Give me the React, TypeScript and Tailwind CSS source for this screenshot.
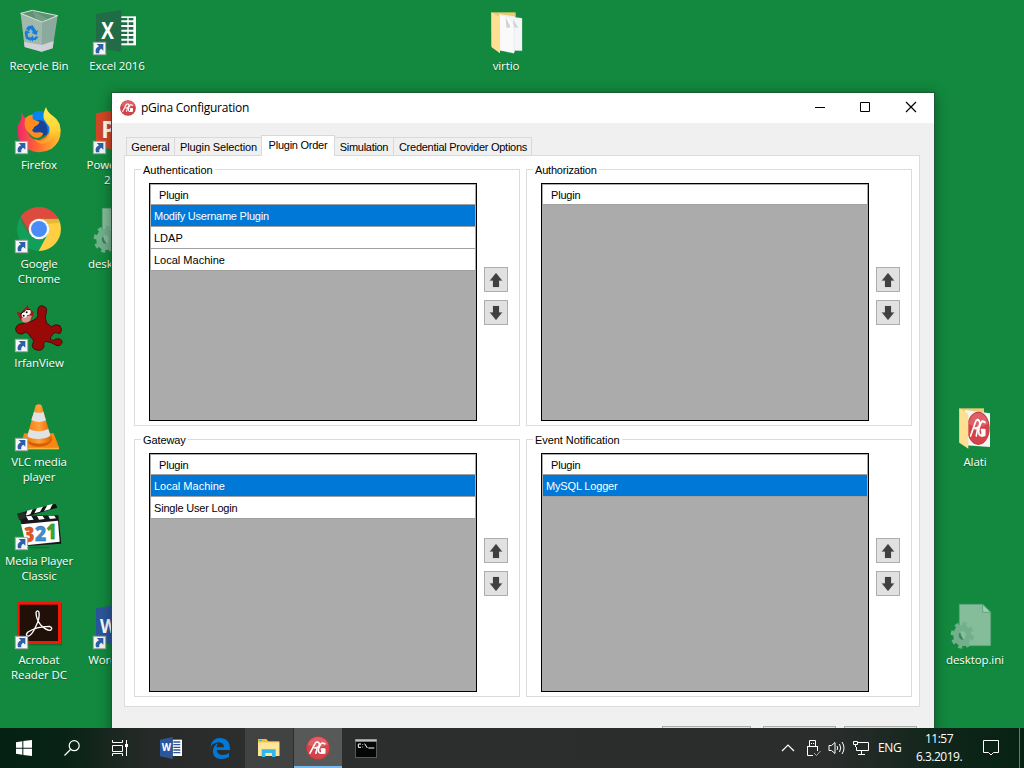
import type { ReactNode } from "react";

const ui = "font-['Liberation_Sans',sans-serif]";
const segoe = "font-['Open_Sans',sans-serif]";

function ShortcutArrow({ x = 45, y }: { x?: number; y: number }) {
  return (
    <g transform={`translate(${x} ${y})`}>
      <rect x="1" y="1" width="37" height="37" fill="#f4f5f7" stroke="#a3a9a5" strokeWidth="3" />
      <path d="M11 6H31V26L25 20Q17 24 19 34H9Q4 19 18 13Z" fill="#2c5fa5" />
    </g>
  );
}

function GinaMark() {
  return (
    <g>
      <circle r="50" fill="#c23a41" />
      <circle r="47" fill="#d4434a" />
      <path d="M-44-14A46 46 0 0 1 44-14Q0 5-44-14Z" fill="#e5777b" opacity=".6" />
      <g fill="none" stroke="#fff" strokeWidth="7" strokeLinecap="round" strokeLinejoin="round">
        <path d="M-34 22L-12-20Q-9-27 0-25Q10-20 4-8Q0 0-15 0M-4 4L-9 22" />
        <path d="M29-18Q13-27 7-8Q-2 8 4 18Q9 24 22 21L27 5H14" />
      </g>
      <rect x="13" y="2" width="19" height="22" rx="3" fill="#fff" />
    </g>
  );
}

function IniDrawing() {
  return (
    <g>
      <path d="M88 643H158L182 667V767H88Z" fill="#85bd9b" stroke="#5fa47c" strokeWidth="2" />
      <path d="M158 643V667H182Z" fill="#a1cdb2" stroke="#4d986d" strokeWidth="2" />
      <g transform="translate(97 736) scale(.86 1)">
        <circle r="22" fill="none" stroke="#72b08c" strokeWidth="20" />
        <circle r="34" fill="none" stroke="#72b08c" strokeWidth="13" strokeDasharray="13.35 13.35" />
        <path d="M-8-9A13 13 0 0 0 4 13Q-5 2-8-9Z" fill="#3b805a" />
      </g>
    </g>
  );
}

const icons: Record<string, ReactNode> = {
  bin: (
    <svg viewBox="3 0 228 174" className="h-[58px] w-[76px]">
      <path d="M62 40L126 66L173 47L158 145L125 155L74 141Z" fill="#8ba99c" />
      <path d="M62 40L126 66L125 155L74 141Z" fill="#b0c4b9" opacity=".6" />
      <path d="M72 126L125 135L161 123L158 145L125 155L74 141Z" fill="#d5d5dc" opacity=".9" />
      <path d="M62 40L97 31L173 47L126 66Z" fill="#5e9274" stroke="#dce5df" strokeWidth="3" />
      <path d="M97 31L107 56L126 65L142 57Z" fill="#84a895" opacity=".6" />
      <g fill="#187ed5">
        <path d="M84 79L98 76L109 93L114 90L110 105L95 99L99 96L92 86L87 94L78 87Z" />
        <path d="M77 91L90 96L87 100L83 99L84 110L93 113V123L78 116L74 100Z" />
        <path d="M108 108L115 111L107 121L99 120V126L90 115L99 106V112L104 113Z" />
      </g>
    </svg>
  ),
  excel: (
    <svg viewBox="237 0 228 174" className="h-[58px] w-[76px]">
      <rect x="350" y="49" width="58" height="87" fill="#fff" />
      <g fill="#216c46">
        <path d="M362 54H382V61H362ZM386 54H400V61H386ZM362 67H382V75H362ZM386 67H400V75H386ZM362 81H382V89H362ZM386 81H400V89H386ZM362 95H382V102H362ZM386 95H400V102H386ZM362 108H382V116H362ZM386 108H400V116H386ZM362 122H382V130H362ZM386 122H400V130H386Z" />
        <path d="M288 42L364 30V156L288 142Z" />
      </g>
      <text x="323" y="116" textAnchor="middle" fontSize="68" fontWeight="700" fontFamily="Open Sans" fill="#fff" textLength="38" lengthAdjust="spacingAndGlyphs">X</text>
      <ShortcutArrow x={279} y={126} />
    </svg>
  ),
  power: (
    <svg viewBox="237 297 228 174" className="h-[58px] w-[76px]">
      <path d="M288 340L364 327V453L288 439Z" fill="#d24726" />
      <text x="326" y="414" textAnchor="middle" fontSize="70" fontWeight="700" fontFamily="Open Sans" fill="#fff">P</text>
      <ShortcutArrow x={279} y={423} />
    </svg>
  ),
  word: (
    <svg viewBox="237 12 228 174" className="h-[58px] w-[76px]">
      <path d="M288 55L364 43V168L288 155Z" fill="#2b579a" />
      <text x="325" y="130" textAnchor="middle" fontSize="60" fontWeight="700" fontFamily="Open Sans" fill="#fff" textLength="50" lengthAdjust="spacingAndGlyphs">W</text>
      <ShortcutArrow x={279} y={138} />
    </svg>
  ),
  firefox: (
    <svg viewBox="3 297 228 174" className="h-[58px] w-[76px]">
      <defs>
        <linearGradient id="ffBody" x1="0" y1="0" x2="1" y2="0"><stop stopColor="#ef256d" /><stop offset=".45" stopColor="#ff6532" /><stop offset="1" stopColor="#ffc429" /></linearGradient>
        <linearGradient id="ffTail" x1="0" y1="0" x2="0" y2="1"><stop stopColor="#fff056" /><stop offset=".65" stopColor="#ffd033" /><stop offset="1" stopColor="#ff962a" /></linearGradient>
      </defs>
      <path d="M65 336Q69 350 76 354Q92 372 84 396Q92 421 118 420Q146 414 148 385L150 370Q178 368 182 391Q183 427 154 447Q119 465 87 449Q54 433 52 395Q51 375 64 357Z" fill="url(#ffBody)" />
      <path d="M92 346Q110 326 136 336Q156 368 146 400Q118 420 92 396Z" fill="#0a84ee" />
      <path d="M94 373Q107 355 130 363Q147 379 142 403Q113 418 95 399Z" fill="#19429b" />
      <path d="M138 321Q127 343 132 358Q139 369 148 381Q156 410 132 421Q115 426 102 417Q118 437 145 430Q169 424 179 402Q188 367 158 347Q143 338 138 321Z" fill="url(#ffTail)" />
      <path d="M76 354Q87 343 99 344Q95 353 101 359L118 365Q119 373 103 380Q101 387 96 390Q100 400 116 397Q126 395 130 401Q124 412 111 414Q96 412 88 400Q68 384 76 354Z" fill="#ff8c1d" />
      <ShortcutArrow y={423} />
    </svg>
  ),
  chrome: (
    <svg viewBox="3 24 228 174" className="h-[58px] w-[76px]">
      <circle cx="117" cy="117" r="66" fill="#119f59" />
      <path d="M62 80A66 66 0 0 1 176 88H117A29 29 0 0 0 92 132Z" fill="#dd4b3f" />
      <path d="M176 88A66 66 0 0 1 116 183L143 133Q153 109 137 94L117 88Z" fill="#ffce43" />
      <path d="M117 86H175L180 99L141 101Z" fill="#d7ad32" opacity=".65" />
      <path d="M62 80L91 129L87 132L65 97Z" fill="#b23a30" opacity=".5" />
      <circle cx="117" cy="117" r="31" fill="#f7f9f8" />
      <circle cx="117" cy="117" r="24" fill="#4b8bf5" />
      <ShortcutArrow y={150} />
    </svg>
  ),
  irfan: (
    <svg viewBox="3 321 228 174" className="h-[58px] w-[76px]">
      <path d="M80 397Q106 393 114 378Q110 347 124 347Q144 350 139 366Q132 384 140 399L154 410Q168 400 180 407Q189 420 181 430L173 430Q168 424 160 431Q150 440 151 449Q163 454 166 448Q181 443 186 453Q187 468 171 467Q154 456 138 454Q127 459 132 469Q128 484 110 480Q96 477 97 464Q105 450 94 444L84 429Q76 424 66 432Q49 434 47 417Q49 402 66 401Z" fill="#990908" stroke="#400e0c" strokeWidth="3" />
      <path d="M50 366L62 368L83 346L88 359L101 365L97 384L82 399L62 391Z" fill="#a91514" />
      <path d="M64 386Q72 375 96 377L90 393Q75 403 66 394Z" fill="#df8f8c" />
      <circle cx="83" cy="366" r="9" fill="#fff" /><circle cx="73" cy="375" r="8" fill="#fff" />
      <circle cx="80" cy="367" r="3" fill="#111" /><circle cx="71" cy="377" r="3" fill="#111" />
      <path d="M70 365Q79 355 91 359M62 373L70 365" fill="none" stroke="#240b09" strokeWidth="3" />
      <ShortcutArrow y={447} />
    </svg>
  ),
  vlc: (
    <svg viewBox="3 18 228 174" className="h-[58px] w-[76px]">
      <defs><linearGradient id="vlcCone"><stop stopColor="#ef7a12" /><stop offset=".5" stopColor="#ffa13a" /><stop offset="1" stopColor="#e16304" /></linearGradient></defs>
      <path d="M72 130H161L177 172Q177 178 169 178H60Z" fill="#f58713" />
      <path d="M56 173H177V178H56Z" fill="#ffb53e" />
      <path d="M83 139Q87 160 116 162Q146 160 154 139L157 149Q148 169 116 170Q86 168 77 152Z" fill="#d65f06" />
      <path d="M107 46Q117 40 125 46L154 146Q151 160 116 160Q82 159 80 145Z" fill="url(#vlcCone)" />
      <path d="M102 65Q117 72 130 65L138 91Q116 102 94 90ZM88 118Q116 130 145 117L151 136Q145 146 116 147Q85 146 82 138Z" fill="#e1e2e5" />
      <ShortcutArrow y={144} />
    </svg>
  ),
  mpc: (
    <svg viewBox="3 315 228 174" className="h-[58px] w-[76px]">
      <path d="M52 371L167 341L172 353L67 383Z" fill="#111" />
      <path d="M82 362L98 358L91 373L77 377ZM111 354L129 350L120 365L103 370ZM142 346L158 342L150 358L132 363Z" fill="#fff" />
      <path d="M58 377L175 376L184 461L80 468Z" fill="#171918" />
      <path d="M63 403L174 392L179 455L78 466Z" fill="#fff" />
      <path d="M78 379L94 378L101 389L85 391ZM111 378H128L134 387L117 389ZM145 377H163L168 385L150 387Z" fill="#fff" />
      <path d="M51 371L76 367V384L57 390Z" fill="#282b2a" />
      <g fontFamily="Open Sans" fontWeight="800" fontSize="62">
        <text x="72" y="456" fill="#e25320" stroke="#944026" strokeWidth="1" textLength="31" lengthAdjust="spacingAndGlyphs">3</text>
        <text x="105" y="453" fill="#438cd3" stroke="#315b94" strokeWidth="1" textLength="34" lengthAdjust="spacingAndGlyphs">2</text>
        <text x="139" y="448" fill="#38a72d" stroke="#276c2b" strokeWidth="1" textLength="31" lengthAdjust="spacingAndGlyphs">1</text>
      </g>
      <path d="M85 473H147" stroke="#0b592b" strokeWidth="2" />
      <ShortcutArrow y={441} />
    </svg>
  ),
  acrobat: (
    <svg viewBox="3 12 228 174" className="h-[58px] w-[76px]">
      <rect x="53" y="40" width="133" height="126" fill="#085c2a" opacity=".6" />
      <rect x="51" y="36" width="132" height="126" fill="#f21808" />
      <rect x="59" y="44" width="115" height="109" fill="#201008" />
      <path d="M108 67Q113 58 117 67Q120 84 108 108Q95 138 83 139Q75 135 84 126Q107 110 148 109Q161 114 151 121Q139 122 123 106Q108 88 108 67Z" fill="none" stroke="#fff" strokeWidth="4" />
      <ShortcutArrow y={138} />
    </svg>
  ),
  iniLeft: (
    <svg viewBox="18 612 228 174" className="h-[58px] w-[76px]"><IniDrawing /></svg>
  ),
  ini: (
    <svg viewBox="21 612 228 174" className="h-[58px] w-[76px]"><IniDrawing /></svg>
  ),
  virtio: (
    <svg viewBox="-6 0 228 174" className="h-[58px] w-[76px]">
      <path d="M64 37H137V140H64Z" fill="#ebcb72" />
      <path d="M88 43L134 49V156L90 151Z" fill="#f5f5f5" />
      <path d="M111 49L156 55V152L117 151Z" fill="#f4f5f6" stroke="#dadddd" />
      <path d="M88 43L119 53L132 77V160L90 151Z" fill="#fafafa" stroke="#d7dada" />
      <path d="M107 51L109 83L122 82ZM129 56L132 82L145 84Z" fill="#d0d4d4" />
      <path d="M64 37L90 52V160L65 142Z" fill="#ffdf91" />
    </svg>
  ),
  alati: (
    <svg viewBox="21 18 228 174" className="h-[58px] w-[76px]">
      <path d="M88 55H162V157H88Z" fill="#eccb75" />
      <path d="M105 60L180 70V171L108 166Z" fill="#f5f6f6" />
      <g transform="translate(145 115) scale(.68 1)"><GinaMark /></g>
      <path d="M88 55L115 71V176L88 158Z" fill="#ffdf91" />
    </svg>
  ),
};

type Item = { icon: string; lines: string[]; pos: string };
const desktop: Item[] = [
  { icon: "bin", lines: ["Recycle Bin"], pos: "left-[1px] top-0" },
  { icon: "firefox", lines: ["Firefox"], pos: "left-[1px] top-[99px]" },
  { icon: "chrome", lines: ["Google", "Chrome"], pos: "left-[1px] top-[198px]" },
  { icon: "irfan", lines: ["IrfanView"], pos: "left-[1px] top-[297px]" },
  { icon: "vlc", lines: ["VLC media", "player"], pos: "left-[1px] top-[396px]" },
  { icon: "mpc", lines: ["Media Player", "Classic"], pos: "left-[1px] top-[495px]" },
  { icon: "acrobat", lines: ["Acrobat", "Reader DC"], pos: "left-[1px] top-[594px]" },
  { icon: "excel", lines: ["Excel 2016"], pos: "left-[79px] top-0" },
  { icon: "power", lines: ["PowerPoint", "2016"], pos: "left-[79px] top-[99px]" },
  { icon: "iniLeft", lines: ["desktop.ini"], pos: "left-[79px] top-[198px]" },
  { icon: "word", lines: ["Word 2016"], pos: "left-[79px] top-[594px]" },
  { icon: "virtio", lines: ["virtio"], pos: "left-[468px] top-0" },
  { icon: "alati", lines: ["Alati"], pos: "left-[937px] top-[396px]" },
  { icon: "ini", lines: ["desktop.ini"], pos: "left-[937px] top-[594px]" },
];

function DesktopItem({ item }: { item: Item }) {
  return (
    <div className={`absolute flex w-[76px] flex-col items-center ${item.pos}`}>
      {icons[item.icon]}
      <div className="text-center text-[11.5px] leading-[15px] tracking-[-0.1px] whitespace-nowrap text-white [text-shadow:0_1px_1px_#0b5b2b]">
        {item.lines.map((l) => <div key={l}>{l}</div>)}
      </div>
    </div>
  );
}

function ArrowButton({ down = false }: { down?: boolean }) {
  return (
    <button className="flex h-[25px] w-6 items-center justify-center border border-[#adadad] bg-[#e1e1e1]">
      <svg viewBox="0 0 16 16" className={down ? "h-4 w-4 rotate-180" : "h-4 w-4"}>
        <path d="M8 .8L15 9H11.3V15.2H4.7V9H1Z" fill="#9a9a9a" opacity=".55" />
        <path d="M8 1L14 8.5H11V15H5V8.5H2Z" fill="#404040" />
      </svg>
    </button>
  );
}

type Row = { label: string; tracking?: string };

function GroupBox({ title, titleTracking = "", rows, size, list, buttons }: { title: string; titleTracking?: string; rows: Row[]; size: string; list: string; buttons: string }) {
  return (
    <section className={`relative flex w-[386px] border border-[#dcdcdc] pl-[14px] pt-[13px] ${size}`}>
      <span className={`absolute top-[-7px] left-[6px] bg-white px-[2px] leading-[14px] whitespace-nowrap ${titleTracking}`}>{title}</span>
      <div className={`w-[328px] shrink-0 border border-black bg-[#ababab] px-px pt-px ${list}`}>
        <div className="h-5 border-b border-[#a0a0a0] bg-white pl-2 leading-5 tracking-[-0.2px]">Plugin</div>
        {rows.map((r, i) => (
          <div key={r.label} className={`h-[22px] border-b border-[#a0a0a0] pl-[3px] leading-[22px] ${r.tracking ?? ""} ${i === 0 ? "bg-[#0078d7] text-white" : "bg-white"}`}>{r.label}</div>
        ))}
      </div>
      <div className={`ml-[7px] flex flex-col gap-2 ${buttons}`}>
        <ArrowButton />
        <ArrowButton down />
      </div>
    </section>
  );
}

const tabBase = "flex shrink-0 justify-center border border-[#d9d9d9] whitespace-nowrap";

function ConfigWindow() {
  return (
    <div className="absolute top-[92px] left-[111px] flex h-[660px] w-[824px] flex-col border border-[#1b5b33] bg-[#f0f0f0] shadow-[0_2px_12px_rgba(0,0,0,0.4)]">
      <header className="flex h-[30px] shrink-0 items-center bg-white pl-2">
        <svg viewBox="-51 -51 102 102" className="h-4 w-4"><GinaMark /></svg>
        <span className="ml-[5px] text-[12px] tracking-[-0.25px] text-black">pGina Configuration</span>
        <div className="ml-auto flex h-full items-center">
          <svg viewBox="0 0 46 30" className="h-[30px] w-[46px]"><path d="M19 14.5H29" stroke="#000" /></svg>
          <svg viewBox="0 0 46 30" className="h-[30px] w-[46px]"><path d="M18.500 9.500H27.500V18.500H18.500Z" fill="none" stroke="#000" /></svg>
          <svg viewBox="0 0 46 30" className="h-[30px] w-[46px]"><path d="M18 9L28 19M28 9L18 19" stroke="#000" strokeWidth="1.2" /></svg>
        </div>
      </header>
      <div className={`flex flex-1 flex-col px-3 pt-3 text-[11px] text-black ${ui}`}>
        <nav className="z-10 flex h-[21px] items-end pl-[2px]">
          <div className={`${tabBase} h-[19px] w-[49px] leading-[19px] tracking-[-0.1px]`}>General</div>
          <div className={`${tabBase} -ml-px h-[19px] w-[88px] pl-px leading-[19px] tracking-[-0.12px]`}>Plugin Selection</div>
          <div className={`${tabBase} -ml-px h-[21px] w-[74px] border-b-white bg-white leading-[18px] tracking-[-0.25px]`}>Plugin Order</div>
          <div className={`${tabBase} -ml-px h-[19px] w-[60px] leading-[19px] tracking-[-0.3px]`}>Simulation</div>
          <div className={`${tabBase} -ml-px h-[19px] w-[139px] pl-px leading-[19px] tracking-[-0.26px]`}>Credential Provider Options</div>
        </nav>
        <div className="-mt-px grid h-[552px] w-[796px] shrink-0 grid-cols-[386px_386px] content-start gap-x-[6px] gap-y-[13px] border border-[#dcdcdc] bg-white pt-[13px] pl-[9px]">
          <GroupBox title="Authentication" rows={[{ label: "Modify Username Plugin", tracking: "tracking-[-0.23px]" }, { label: "LDAP" }, { label: "Local Machine" }]} size="h-[257px]" list="h-[238px]" buttons="pt-[84px]" />
          <GroupBox title="Authorization" titleTracking="tracking-[-0.2px]" rows={[]} size="h-[257px]" list="h-[238px]" buttons="pt-[84px]" />
          <GroupBox title="Gateway" titleTracking="tracking-[-0.1px]" rows={[{ label: "Local Machine" }, { label: "Single User Login", tracking: "tracking-[-0.2px]" }]} size="h-[258px]" list="h-[239px]" buttons="pt-[85px]" />
          <GroupBox title="Event Notification" titleTracking="tracking-[-0.06px]" rows={[{ label: "MySQL Logger", tracking: "tracking-[-0.17px]" }]} size="h-[258px]" list="h-[239px]" buttons="pt-[85px]" />
        </div>
        <div className="mt-[19px] flex pl-[538px]">
          <button className="h-6 w-[89px] border border-[#adadad] bg-[#e1e1e1]" />
          <button className="ml-3 h-6 w-[73px] border border-[#adadad] bg-[#e1e1e1]" />
          <button className="ml-2 h-6 w-[73px] border border-[#adadad] bg-[#e1e1e1]" />
        </div>
      </div>
    </div>
  );
}

function Taskbar() {
  const tile = "flex h-full shrink-0 items-center justify-center";
  return (
    <footer className="absolute inset-x-0 bottom-0 flex h-10 items-center bg-[linear-gradient(90deg,#042113_0px,#082315_65px,#272a28_150px,#2c2e2d_240px,#2b2d2c_830px,#10251a_940px,#062213_1024px)] text-white">
      <div className={`${tile} w-12`}>
        <svg viewBox="0 0 48 48" className="h-4 w-4" fill="#fff"><path d="M0 7L19 4V23H0ZM22 3L48 0V23H22ZM0 26H19V44L0 41ZM22 26H48V48L22 45Z" /></svg>
      </div>
      <div className={`${tile} w-12`}>
        <svg viewBox="0 0 16 16" className="h-4 w-4" fill="none" stroke="#fff" strokeWidth="1.2"><circle cx="10.2" cy="5.7" r="5" /><path d="M6.500 9.500L.5 15.5" /></svg>
      </div>
      <div className={`${tile} w-12`}>
        <svg viewBox="0 0 16 16" className="h-4 w-4" fill="none" stroke="#fff"><path d="M.5 0V2.500H10.500V0M.5 5.500H10.500V11.500H.5ZM.5 16V13.500H10.500V16M14.500 0V4M14.500 7V16" /><path d="M13 4H16V7H13Z" fill="#fff" stroke="none" /></svg>
      </div>
      <div className={`${tile} ml-[3px] w-12`}>
        <svg viewBox="0 0 66 66" className="h-[22px] w-[22px]"><path d="M38 8H66V57H38Z" fill="#fff" /><path d="M40 15H61M40 23H61M40 31H61M40 39H61M40 47H61" stroke="#2b579a" strokeWidth="4" /><path d="M0 8L38 0V66L0 58Z" fill="#2b579a" /><text x="19" y="43" textAnchor="middle" fontSize="29" fontWeight="700" fontFamily="Open Sans" fill="#fff">W</text></svg>
      </div>
      <div className={`${tile} ml-px w-12`}>
        <svg viewBox="0 0 60 63" className="h-[21px] w-5"><path d="M0 29Q5 0 31 0Q61 0 60 36H20Q22 51 39 51Q49 51 57 45V57Q46 63 34 63Q7 61 9 37Q11 21 25 16Q19 23 20 28H42Q42 14 26 13Q8 14 0 29Z" fill="#0078d7" /></svg>
      </div>
      <div className={`${tile} ml-px w-12 bg-[#414342]`}>
        <svg viewBox="0 0 64 54" className="h-[18px] w-[21.33px]"><path d="M0 0H25L31 7H64V51H0Z" fill="#f5bd36" /><path d="M0 10H64V51H0Z" fill="#ffe59a" /><path d="M11 54V31H53V54H42V42H22V54Z" fill="#35b6e9" /><path d="M4 3H11V6H4Z" fill="#37a7d7" /></svg>
      </div>
      <div className={`${tile} ml-px w-12 border-b-2 border-[#76b9ed] bg-[#565958] pt-[2px]`}>
        <svg viewBox="-51 -51 102 102" className="h-6 w-6"><GinaMark /></svg>
      </div>
      <div className={`${tile} w-12`}>
        <svg viewBox="0 0 66 57" className="h-[19px] w-[22px]"><path d="M1 1H65V56H1Z" fill="#050606" stroke="#8c9290" strokeWidth="2" /><path d="M1 1H65V8H1Z" fill="#bdc1bf" /><path d="M18 15H10V25H18M23 16V18M23 23V25M29 14L37 27M40 27H58" fill="none" stroke="#fff" strokeWidth="3" /></svg>
      </div>
      <div className="ml-auto flex h-full items-center">
        <svg viewBox="0 0 14 8" className="h-2 w-[14px]" fill="none" stroke="#fff" strokeWidth="1.2"><path d="M1 7L7 1L13 7" /></svg>
        <svg viewBox="0 0 14 17" className="ml-3 h-[17px] w-[14px]" fill="none" stroke="#fff"><path d="M2.500 6V.5H8.500V6M.5 6V15.500H6M10.500 6V11M.5 6.500H10.500" /><path d="M4 3H5V4H4ZM6 3H7V4H6Z" fill="#fff" stroke="none" /><path d="M7 13L9.500 15.500L13.500 11" stroke="#aaa" /></svg>
        <svg viewBox="0 0 17 14" className="ml-[7px] h-[14px] w-[17px]" fill="none" stroke="#fff"><path d="M1 4.500H3.500L7 1.500V12.500L3.500 9.500H1ZM9 5Q10.500 7 9 9M11.500 3Q14 7 11.500 11M14 1Q18 7 14 13" /></svg>
        <svg viewBox="0 0 16 14" className="ml-2 h-[14px] w-4" fill="none" stroke="#fff"><path d="M5 1.500H15.500V9.500H3.500V6M8.500 10V13M5 13.500H12M.5 .5H4.500V3.500H.5ZM2.500 4V6" /></svg>
        <span className="ml-[9px] w-6 text-[12px] tracking-[-0.4px]">ENG</span>
        <div className="ml-[11px] w-[52px] text-center text-[12px] leading-[18px] tracking-[-0.5px] whitespace-nowrap"><div>11:57</div><div>6.3.2019.</div></div>
        <svg viewBox="0 0 16 16" className="ml-[18px] h-4 w-4" fill="none" stroke="#fff"><path d="M.5 .5H15.500V12.500H10.500L8 15L5.500 12.500H.5Z" /></svg>
        <div className="ml-5 h-full w-[5px] border-l border-[#697a70]" />
      </div>
    </footer>
  );
}

export default function App() {
  return (
    <main className={`relative h-[768px] w-[1024px] overflow-hidden bg-[#12893e] ${segoe}`}>
      {desktop.map((item, i) => <DesktopItem key={i} item={item} />)}
      <ConfigWindow />
      <Taskbar />
    </main>
  );
}
